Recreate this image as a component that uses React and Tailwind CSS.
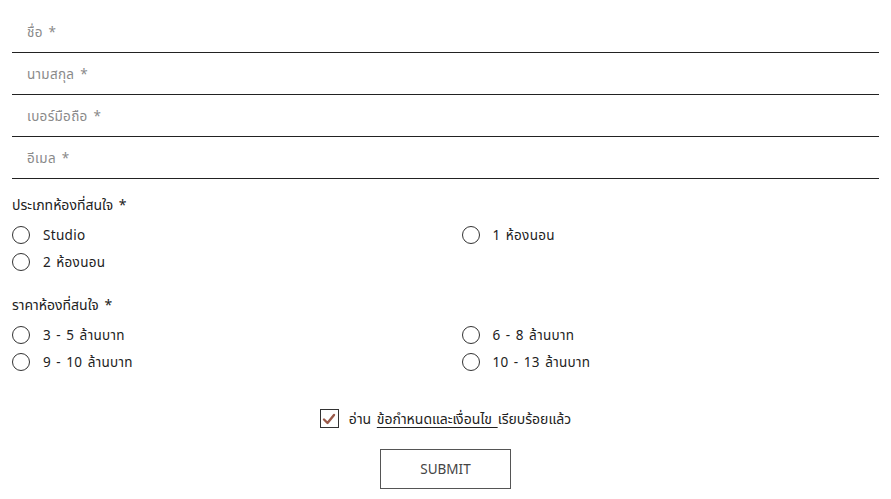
import React, { useState } from 'react';

const roomTypes = ['Studio', '1 ห้องนอน', '2 ห้องนอน'];
const prices = ['3 - 5 ล้านบาท', '6 - 8 ล้านบาท', '9 - 10 ล้านบาท', '10 - 13 ล้านบาท'];

function Field({ placeholder }) {
  return (
    <div className="border-b-[1.5px] border-[#222]">
      <input
        placeholder={placeholder}
        className="w-full h-[41px] px-[15px] text-[13.5px] tracking-[0.3px] [word-spacing:2px] text-[#333] placeholder:text-[#8a8a8a] outline-none bg-transparent"
      />
    </div>
  );
}

function RadioGroup({ label, name, options, value, onChange }) {
  return (
    <div>
      <p className="text-[14px] text-[#222] leading-[20px] [word-spacing:2px]">{label}</p>
      <div className="grid grid-cols-2 gap-x-8 gap-y-[7px] mt-[10px]">
        {options.map((o) => (
          <label key={o} className="flex items-center gap-[13px] h-[20px] cursor-pointer">
            <span className="w-[18px] h-[18px] rounded-full border-[1.5px] border-[#333] flex items-center justify-center">
              {value === o && <span className="w-[8px] h-[8px] rounded-full bg-[#333]" />}
            </span>
            <input type="radio" name={name} className="hidden" checked={value === o} onChange={() => onChange(o)} />
            <span className="text-[13.5px] text-[#222] tracking-[0.3px] [word-spacing:1.5px]">{o}</span>
          </label>
        ))}
      </div>
    </div>
  );
}

export default function App() {
  const [room, setRoom] = useState(null);
  const [price, setPrice] = useState(null);
  const [agree, setAgree] = useState(true);

  return (
    <div className="w-[891px] h-[499px] bg-white px-[12px] pt-[11px]" style={{ fontFamily: '"Noto Sans", "Noto Sans Thai", sans-serif' }}>
      <Field placeholder="ชื่อ *" />
      <Field placeholder="นามสกุล *" />
      <Field placeholder="เบอร์มือถือ *" />
      <Field placeholder="อีเมล *" />

      <div className="mt-[16px]">
        <RadioGroup label="ประเภทห้องที่สนใจ *" name="room" options={roomTypes} value={room} onChange={setRoom} />
      </div>
      <div className="mt-[23px]">
        <RadioGroup label="ราคาห้องที่สนใจ *" name="price" options={prices} value={price} onChange={setPrice} />
      </div>

      <div className="flex justify-center items-center gap-[10px] mt-[36px]">
        <button
          onClick={() => setAgree(!agree)}
          className="w-[19px] h-[19px] border-[1.5px] border-[#333] flex items-center justify-center"
        >
          {agree && (
            <svg width="14" height="14" viewBox="0 0 14 14">
              <path d="M2 7.5 L5.5 11 L12 3" fill="none" stroke="#9a5a4a" strokeWidth="2.4" strokeLinecap="round" strokeLinejoin="round" />
            </svg>
          )}
        </button>
        <p className="text-[14px] text-[#222] [word-spacing:2px]">
          อ่าน <a className="underline underline-offset-[3px] decoration-[#222]">ข้อกำหนดและเงื่อนไข </a>เรียบร้อยแล้ว
        </p>
      </div>

      <div className="flex justify-center mt-[20px]">
        <button className="w-[131px] h-[40px] border border-[#555] text-[13.5px] text-[#444]">SUBMIT</button>
      </div>
    </div>
  );
}
